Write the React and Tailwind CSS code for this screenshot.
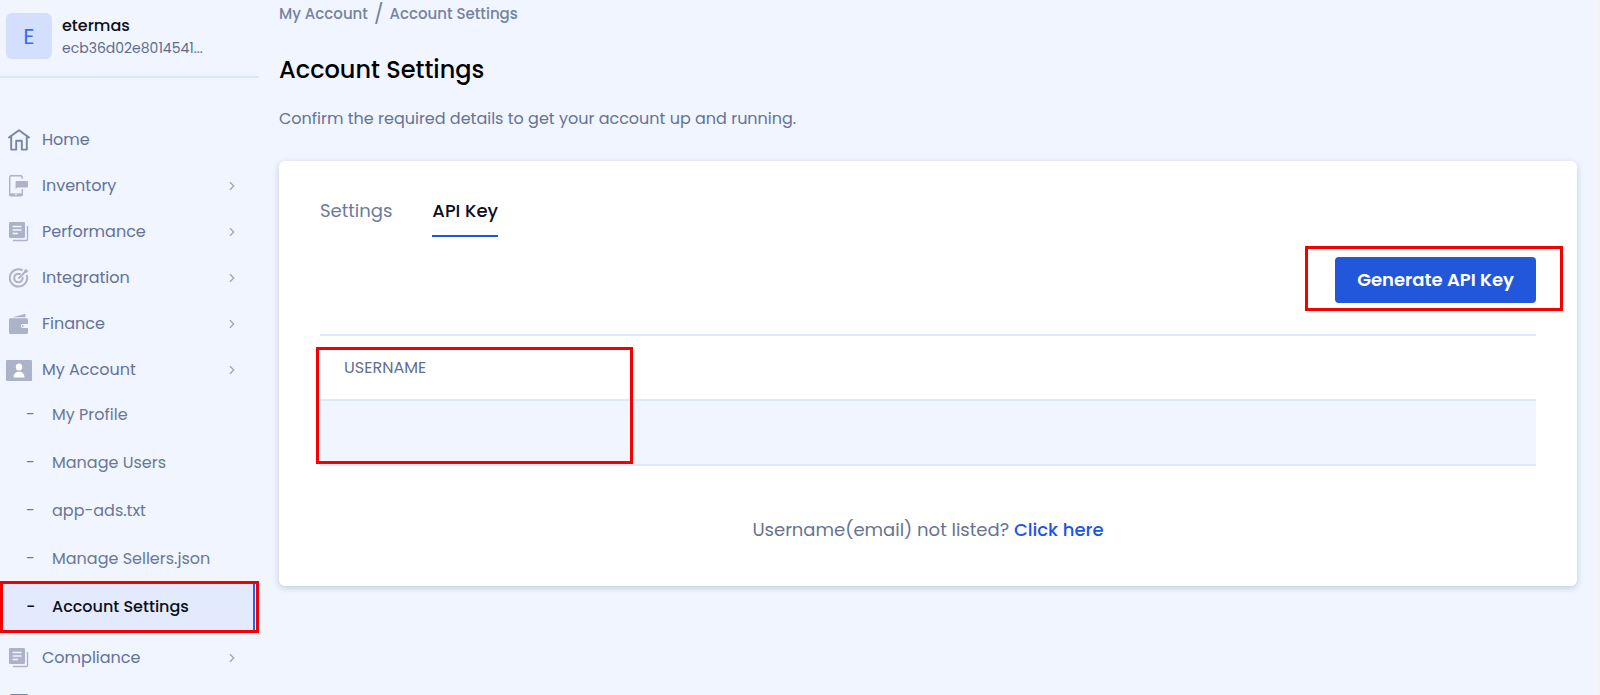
import React from 'react';
import { FiChevronRight } from "react-icons/fi";

function HomeIcon() {
  return (
    <svg width="22" height="22" viewBox="0 0 22 22" fill="none" stroke="#7885a3" strokeWidth="1.9" strokeLinejoin="round" strokeLinecap="round">
      <path d="M1 8.4 11 1.2l10 7.2" />
      <path d="M3.2 7.2v13.4h5v-8.8h5.6v8.8h5V7.2" />
    </svg>
  );
}

function InventoryIcon() {
  return (
    <svg width="20" height="22" viewBox="0 0 20 22" fill="none">
      <path d="M13.2 4V2.2c0-.8-.5-1.4-1.3-1.4H1.9C1.1.8.7 1.400.7 2.200v17.200c0 .8.4 1.400 1.200 1.400h10c.8 0 1.300-.6 1.300-1.400V14" stroke="#acb3c8" strokeWidth="1.4" />
      <path d="M.7 18.4h12.5v2.200H.7z" fill="#acb3c8" />
      <path d="M6 19h2v1H6z" fill="#f0f5ff" />
      <path d="M7.100 6h11c.5 0 .9.4.9.9v4.700c0 .5-.4.9-.9.9H8.500l-1.900 1.500V6.500c0-.3.2-.5.5-.5z" fill="#acb3c8" />
    </svg>
  );
}

function ReportIcon() {
  return (
    <svg width="20" height="20" viewBox="0 0 20 20" fill="none">
      <rect width="16" height="16" rx="1.2" fill="#acb3c8" />
      <path d="M18.5 4v13.600c0 .5-.4.9-.9.9H4" stroke="#acb3c8" strokeWidth="1.4" />
      <path d="M3.500 4.500h9M3.500 8h9M3.500 11.500H9" stroke="#f0f5ff" strokeWidth="1.5" />
    </svg>
  );
}

function TargetIcon() {
  return (
    <svg width="20" height="20" viewBox="0 0 20 20" fill="none" stroke="#acb3c8" strokeWidth="2">
      <path d="M13.700 2.300A8.700 8.700 0 1 0 17.600 6.800" />
      <path d="M11.600 6.300A4.300 4.300 0 1 0 13.600 9" />
      <path d="M9.400 10.600 16.500 3.500" />
      <path d="M15 2.800 17.300.5l.5 1.800 1.800.5-2.300 2.300-2-.3z" fill="#acb3c8" stroke="none" />
    </svg>
  );
}

function WalletIcon() {
  return (
    <svg width="20" height="22" viewBox="0 0 20 22" fill="#acb3c8">
      <path d="M3.500 4.200 16.500.8V4.200z" />
      <path d="M1.500 5.200h16c.9 0 1.500.6 1.500 1.500v4.300h-5.200a2 2 0 0 0 0 4H19v4.500c0 .9-.6 1.500-1.500 1.500h-16C.6 21 0 20.400 0 19.500V6.700c0-.9.6-1.500 1.500-1.500z" />
      <circle cx="13.8" cy="13" r="0.9" />
    </svg>
  );
}

function AccountIcon() {
  return (
    <svg width="26" height="21" viewBox="0 0 26 21">
      <rect width="26" height="21" rx="1" fill="#acb3c8" />
      <ellipse cx="13" cy="7" rx="3.2" ry="3.5" fill="#fff" />
      <path d="M7.500 17.500c0-3.800 2.400-5.800 5.500-5.800s5.500 2 5.500 5.800z" fill="#fff" />
    </svg>
  );
}

function PanelIcon() {
  return (
    <svg width="20" height="20" viewBox="0 0 20 20" fill="none" stroke="#7885a3" strokeWidth="2">
      <rect x="1" y="1" width="18" height="18" rx="2" fill="#acb3c8" />
    </svg>
  );
}

const menu = [
  { label: 'Home', icon: HomeIcon, plain: true },
  { label: 'Inventory', icon: InventoryIcon },
  { label: 'Performance', icon: ReportIcon },
  { label: 'Integration', icon: TargetIcon },
  { label: 'Finance', icon: WalletIcon },
  {
    label: 'My Account',
    icon: AccountIcon,
    children: ['My Profile', 'Manage Users', 'app-ads.txt', 'Manage Sellers.json', 'Account Settings'],
  },
  { label: 'Compliance', icon: ReportIcon },
  { label: '', icon: PanelIcon, plain: true },
];

function SubItem({ label, active }) {
  return (
    <li className="relative px-1">
      <a
        href="#"
        className={`flex h-[46px] items-center pl-[22px] ${active ? 'border-r-2 border-[#2f5fe8] bg-[#e3eafd] font-medium text-[#0b0f1c]' : 'text-[#6a7796]'}`}
      >
        <span className="w-[26px]">-</span>
        {label}
      </a>
      {active && <span className="pointer-events-none absolute -inset-y-[3px] inset-x-0 border-3 border-[#f50000]" />}
    </li>
  );
}

function Sidebar() {
  return (
    <aside className="flex w-[259px] shrink-0 flex-col">
      <div className="flex h-[78px] shrink-0 items-start gap-2.5 border-b-2 border-[#dce6fc] pl-1.5 pt-[13px]">
        <div className="flex size-[46px] items-center justify-center rounded-md bg-[#d3dffc] text-[22px] text-[#3b6df0]">E</div>
        <div className="pt-px">
          <p className="text-base leading-6 font-medium text-[#0b0f1c]">etermas</p>
          <p className="text-sm leading-5 text-[#5f6c8c]">ecb36d02e8014541...</p>
        </div>
      </div>

      <nav className="mt-[42px]">
        <ul className="flex flex-col gap-1.5 text-base text-[#64729a]">
          {menu.map(({ label, icon: Icon, plain, children }) => (
            <li key={label}>
              <a href="#" className="flex h-10 items-center pl-1.5 pr-5">
                <span className="flex w-[26px] justify-center"><Icon /></span>
                <span className="ml-2.5 flex-1">{label}</span>
                {!plain && <FiChevronRight className="size-3.5 text-[#9aa3ba]" />}
              </a>
              {children && (
                <ul className="flex flex-col gap-0.5 py-0.5">
                  {children.map((child) => (
                    <SubItem key={child} label={child} active={child === 'Account Settings'} />
                  ))}
                </ul>
              )}
            </li>
          ))}
        </ul>
      </nav>
    </aside>
  );
}

function ApiKeyCard() {
  return (
    <section className="mt-7 rounded-md bg-white px-[41px] pt-9 pb-[42px] shadow-[0_2px_6px_rgba(90,105,140,0.3)]">
      <div className="flex gap-10 text-lg leading-7">
        <button type="button" className="h-10 pb-3 text-[#6a7a9e]">Settings</button>
        <button type="button" className="h-10 border-b-2 border-[#1a56e8] pb-3 font-medium text-[#0b0f1c]">API Key</button>
      </div>

      <div className="mt-5 flex justify-end">
        <div className="relative">
          <button type="button" className="h-[46px] rounded bg-[#2257dc] px-[22px] text-lg font-semibold text-white">
            Generate API Key
          </button>
          <span className="pointer-events-none absolute -top-[11px] -right-[27px] -bottom-2 -left-[30px] border-3 border-[#f50000]" />
        </div>
      </div>

      <div className="relative mt-[31px]">
        <table className="w-full border-collapse text-left">
          <thead>
            <tr className="h-[65px] border-y-2 border-[#e0e9fc]">
              <th className="px-6 text-base font-normal text-[#5f6f94]">USERNAME</th>
            </tr>
          </thead>
          <tbody>
            <tr className="h-[65px] border-b-2 border-[#e0e9fc] bg-[#f0f5ff]">
              <td></td>
            </tr>
          </tbody>
        </table>
        <span className="pointer-events-none absolute top-[13px] bottom-0.5 -left-1 w-[317px] border-3 border-[#f50000]" />
      </div>

      <p className="mt-[50px] text-center text-lg leading-7 text-[#667390]">
        Username(email) not listed? <a href="#" className="font-medium text-[#1a56e8]">Click here</a>
      </p>
    </section>
  );
}

function App() {
  return (
    <div className="flex h-screen overflow-hidden border-r-3 border-[#f3f3f5] bg-[#f0f5ff] font-['Poppins','Inter',sans-serif]">
      <Sidebar />
      <main className="min-w-0 flex-1 px-5">
        <nav className="flex items-center gap-1.5 pt-0.5 text-[15px] leading-6 font-medium text-[#7682a0]">
          <a href="#">My Account</a>
          <span className="text-xl leading-6 font-normal">/</span>
          <a href="#">Account Settings</a>
        </nav>
        <h1 className="mt-7 text-2xl leading-8 font-medium text-black">Account Settings</h1>
        <p className="mt-[19px] text-base leading-7 text-[#667396]">Confirm the required details to get your account up and running.</p>
        <ApiKeyCard />
      </main>
    </div>
  );
}

export default App;
